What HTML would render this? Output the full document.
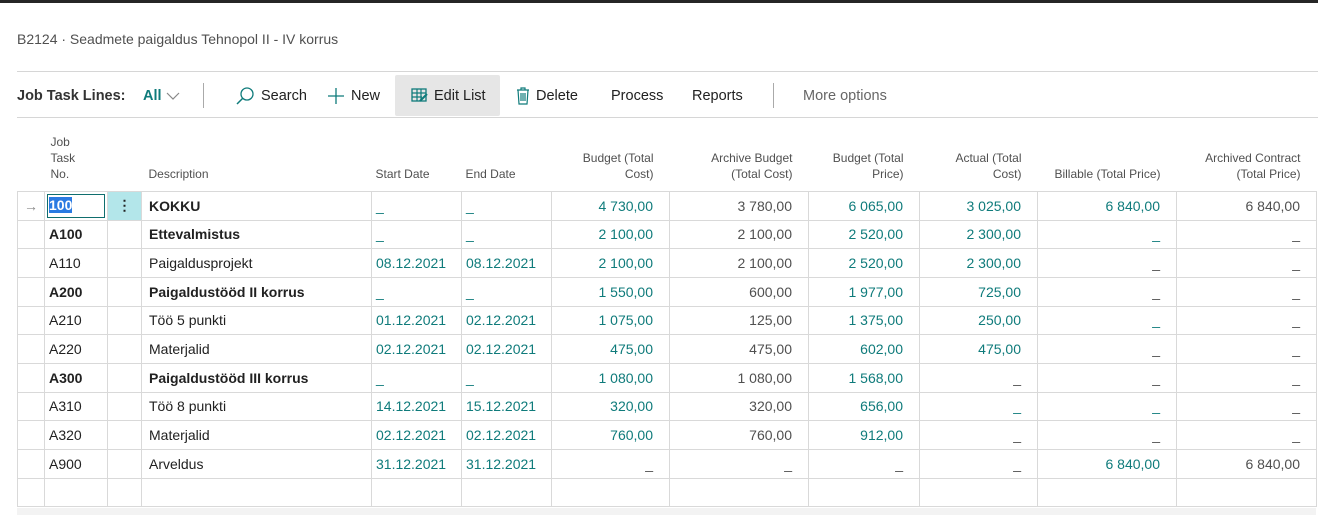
<!DOCTYPE html>
<html><head><meta charset="utf-8"><style>
*{margin:0;padding:0;box-sizing:border-box}
body{width:1318px;height:515px;background:#fff;font-family:"Liberation Sans",sans-serif;color:#212121;position:relative;overflow:hidden}
.top{position:absolute;left:0;top:0;width:1318px;height:3px;background:#262626}
.title{position:absolute;left:17px;top:31px;font-size:14px;color:#505050}
.hr{position:absolute;left:17px;width:1301px;height:1px;background:#d6d6d6}
.bar{position:absolute;top:75px;height:41px;left:17px;right:0;font-size:14.5px;color:#212121}
.bar span{position:absolute;top:0;height:41px;display:flex;align-items:center;white-space:nowrap}
.bar svg{margin-right:6px;flex:none}
.edit{position:absolute;left:378px;top:0;width:105px;height:41px;background:#e6e6e6;border-radius:2px}
.vsep{position:absolute;top:8px;width:1px;height:25px;background:#aaa}
table{position:absolute;left:17px;top:126px;border-collapse:collapse;table-layout:fixed;width:1299px;font-size:14px}
th{font-weight:normal;font-size:12px;color:#505050;vertical-align:bottom;padding:0 4px 9px 4px;line-height:16px;height:65px}
td{height:28.7px;border:1px solid #d9d9d9;padding:0 4px;white-space:nowrap;overflow:hidden}
.r{text-align:right;padding-right:16px}
th.r{text-align:right;padding-right:16px}
.t{color:#0f7b7b}
.g{color:#505050}
.b{font-weight:bold}
.foot{position:absolute;left:17px;top:508px;width:1299px;height:7px;background:#f3f3f3}
</style></head><body>
<div class="top"></div>
<div class="title">B2124 · Seadmete paigaldus Tehnopol II - IV korrus</div>
<div class="hr" style="top:71px"></div>
<div class="bar">
<span style="left:0;font-weight:bold;color:#333">Job Task Lines:</span>
<span style="left:126px;color:#0f7b7b;font-weight:bold">All&nbsp;<svg width="14" height="10" viewBox="0 0 14 10"><path d="M1 2 L7 8 L13 2" fill="none" stroke="#888" stroke-width="1.2"/></svg></span>
<div class="vsep" style="left:186px"></div>
<span style="left:218px"><svg width="20" height="20" viewBox="0 0 20 20"><circle cx="12" cy="8" r="6" fill="none" stroke="#0f7b7b" stroke-width="1.3"/><path d="M8 12 L2 18" stroke="#0f7b7b" stroke-width="1.5"/></svg>Search</span>
<span style="left:310px"><svg width="18" height="18" viewBox="0 0 18 18"><path d="M9 1V17M1 9H17" stroke="#0f7b7b" stroke-width="1.3"/></svg>New</span>
<div class="edit"></div>
<span style="left:394px"><svg width="17" height="15" viewBox="0 0 17 15"><rect x="1" y="1" width="14" height="12" fill="none" stroke="#0f7b7b" stroke-width="1.3"/><path d="M1 5H15M1 9H11M6 1V13M10 1V13" stroke="#0f7b7b" stroke-width="1.2"/><path d="M9 13 L16 6" stroke="#0f7b7b" stroke-width="2"/></svg>Edit List</span>
<span style="left:499px"><svg width="14" height="18" viewBox="0 0 14 18"><path d="M1 3H13M5 3V1H9V3M2 3 L3 17 H11 L12 3M5 6V14M7 6V14M9 6V14" fill="none" stroke="#0f7b7b" stroke-width="1.2"/></svg>Delete</span>
<span style="left:594px">Process</span>
<span style="left:675px">Reports</span>
<div class="vsep" style="left:756px"></div>
<span style="left:786px;color:#666">More options</span>
</div>
<div class="hr" style="top:117px"></div>
<table>
<colgroup><col style="width:27px"><col style="width:63px"><col style="width:34px"><col style="width:230px"><col style="width:90px"><col style="width:90px"><col style="width:118px"><col style="width:139px"><col style="width:111px"><col style="width:118px"><col style="width:139px"><col style="width:140px"></colgroup>
<tr><th></th><th style="text-align:left;padding-left:6px">Job<br>Task<br>No.</th><th></th><th style="text-align:left;padding-left:7px">Description</th><th style="text-align:left">Start Date</th><th style="text-align:left">End Date</th><th class="r">Budget (Total<br>Cost)</th><th class="r">Archive Budget<br>(Total Cost)</th><th class="r">Budget (Total<br>Price)</th><th class="r">Actual (Total<br>Cost)</th><th class="r">Billable (Total Price)</th><th class="r">Archived Contract<br>(Total Price)</th></tr>
<tr><td style="color:#888;text-align:center">→</td><td style="padding:2px"><div style="border:1px solid #0f6e6e;height:24px;padding:2px 1px"><span style="background:#2a7ae2;color:#fff;font-weight:bold">100</span></div></td><td style="background:#b3e6ea;text-align:center;font-weight:bold">⋮</td><td class="b" style="padding-left:7px">KOKKU</td><td class="t">_</td><td class="t">_</td><td class="r t">4 730,00</td><td class="r g">3 780,00</td><td class="r t">6 065,00</td><td class="r t">3 025,00</td><td class="r t">6 840,00</td><td class="r g">6 840,00</td></tr>
<tr><td></td><td class="b">A100</td><td></td><td class="b" style="padding-left:7px">Ettevalmistus</td><td class="t">_</td><td class="t">_</td><td class="r t">2 100,00</td><td class="r g">2 100,00</td><td class="r t">2 520,00</td><td class="r t">2 300,00</td><td class="r t">_</td><td class="r g">_</td></tr>
<tr><td></td><td>A110</td><td></td><td style="padding-left:7px">Paigaldusprojekt</td><td class="t">08.12.2021</td><td class="t">08.12.2021</td><td class="r t">2 100,00</td><td class="r g">2 100,00</td><td class="r t">2 520,00</td><td class="r t">2 300,00</td><td class="r g">_</td><td class="r g">_</td></tr>
<tr><td></td><td class="b">A200</td><td></td><td class="b" style="padding-left:7px">Paigaldustööd II korrus</td><td class="t">_</td><td class="t">_</td><td class="r t">1 550,00</td><td class="r g">600,00</td><td class="r t">1 977,00</td><td class="r t">725,00</td><td class="r g">_</td><td class="r g">_</td></tr>
<tr><td></td><td>A210</td><td></td><td style="padding-left:7px">Töö 5 punkti</td><td class="t">01.12.2021</td><td class="t">02.12.2021</td><td class="r t">1 075,00</td><td class="r g">125,00</td><td class="r t">1 375,00</td><td class="r t">250,00</td><td class="r t">_</td><td class="r g">_</td></tr>
<tr><td></td><td>A220</td><td></td><td style="padding-left:7px">Materjalid</td><td class="t">02.12.2021</td><td class="t">02.12.2021</td><td class="r t">475,00</td><td class="r g">475,00</td><td class="r t">602,00</td><td class="r t">475,00</td><td class="r g">_</td><td class="r g">_</td></tr>
<tr><td></td><td class="b">A300</td><td></td><td class="b" style="padding-left:7px">Paigaldustööd III korrus</td><td class="t">_</td><td class="t">_</td><td class="r t">1 080,00</td><td class="r g">1 080,00</td><td class="r t">1 568,00</td><td class="r g">_</td><td class="r g">_</td><td class="r g">_</td></tr>
<tr><td></td><td>A310</td><td></td><td style="padding-left:7px">Töö 8 punkti</td><td class="t">14.12.2021</td><td class="t">15.12.2021</td><td class="r t">320,00</td><td class="r g">320,00</td><td class="r t">656,00</td><td class="r t">_</td><td class="r t">_</td><td class="r g">_</td></tr>
<tr><td></td><td>A320</td><td></td><td style="padding-left:7px">Materjalid</td><td class="t">02.12.2021</td><td class="t">02.12.2021</td><td class="r t">760,00</td><td class="r g">760,00</td><td class="r t">912,00</td><td class="r g">_</td><td class="r g">_</td><td class="r g">_</td></tr>
<tr><td></td><td>A900</td><td></td><td style="padding-left:7px">Arveldus</td><td class="t">31.12.2021</td><td class="t">31.12.2021</td><td class="r g">_</td><td class="r g">_</td><td class="r g">_</td><td class="r g">_</td><td class="r t">6 840,00</td><td class="r g">6 840,00</td></tr>
<tr><td></td><td></td><td></td><td></td><td></td><td></td><td></td><td></td><td></td><td></td><td></td><td></td></tr>
</table>
<div class="foot"></div>
</body></html>
